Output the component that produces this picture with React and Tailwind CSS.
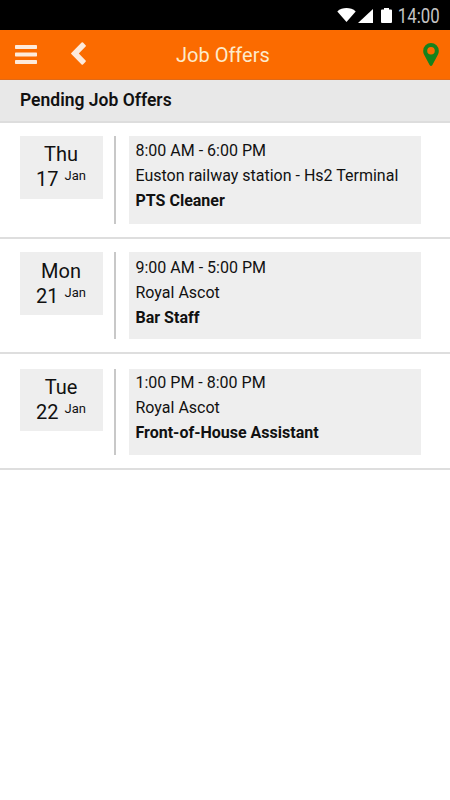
const offers = [
  {
    day: "Thu",
    date: "17",
    month: "Jan",
    time: "8:00 AM - 6:00 PM",
    place: "Euston railway station - Hs2 Terminal",
    role: "PTS Cleaner",
    row: "h-[116px] pt-[13px]",
    box: "h-[88px] pt-[2px]",
    dateBox: "h-[63px] pt-[6px]",
  },
  {
    day: "Mon",
    date: "21",
    month: "Jan",
    time: "9:00 AM - 5:00 PM",
    place: "Royal Ascot",
    role: "Bar Staff",
    row: "h-[115px] pt-[13px]",
    box: "h-[87px] pt-[3px]",
    dateBox: "h-[63px] pt-[7px]",
  },
  {
    day: "Tue",
    date: "22",
    month: "Jan",
    time: "1:00 PM - 8:00 PM",
    place: "Royal Ascot",
    role: "Front-of-House Assistant",
    row: "h-[116px] pt-[15px]",
    box: "h-[86px] pt-[1px]",
    dateBox: "h-[62px] pt-[6px]",
  },
];

function StatusBar() {
  return (
    <div className="flex h-[30px] items-center justify-end bg-black pr-[10px] text-white">
      {/* Wifi */}
      <svg width="19" height="14" viewBox="0 0 19 14" fill="currentColor">
        <path d="M0.3 3.4 C5.2 -1 13.8 -1 18.7 3.4 L9.5 14 Z" />
      </svg>
      {/* Signal */}
      <svg width="15" height="14" viewBox="0 0 15 14" fill="currentColor" className="ml-[2px] mt-[1px]">
        <path d="M15 0 V14 H0 Z" />
      </svg>
      {/* Battery */}
      <svg width="11" height="15" viewBox="0 0 11 15" fill="currentColor" className="ml-2">
        <path d="M3 0 H8 V1.5 H10 Q11 1.5 11 2.5 V14 Q11 15 10 15 H1 Q0 15 0 14 V2.5 Q0 1.5 1 1.5 H3 Z" />
      </svg>
      <span className="-ml-px mt-[3px] origin-right scale-x-[0.86] text-[19.5px] leading-none text-[#c4c4c4]">
        14:00
      </span>
    </div>
  );
}

function Header() {
  return (
    <header className="flex h-[50px] items-center border-b border-[#e06a18] bg-[#fb6b00] pr-[11px] pl-[15px]">
      <div className="flex items-center gap-[34px] text-[#fdeadb]">
        <svg width="22" height="19" viewBox="0 0 22 19" fill="currentColor">
          <rect width="22" height="4" rx="0.7" />
          <rect y="7.5" width="22" height="4" rx="0.7" />
          <rect y="15" width="22" height="4" rx="0.7" />
        </svg>
        <svg width="15" height="23" viewBox="0 0 15 23" fill="currentColor" className="mb-[2px]">
          <path d="M0.3 11 L10.6 0.6 Q11.3 0 12 0.6 L14.6 3.2 Q15.3 3.9 14.6 4.6 L7.8 11.5 L14.6 18.4 Q15.3 19.1 14.6 19.8 L12 22.4 Q11.3 23 10.6 22.4 L0.3 12 Q-0.2 11.5 0.3 11 Z" />
        </svg>
      </div>
      <h1 className="ml-[90px] text-[20px] leading-none text-[#fdeacb]">Job Offers</h1>
      <svg width="16" height="23" viewBox="0 0 16 23" className="ml-auto">
        <path
          fill="#15821c"
          fillRule="evenodd"
          d="M8 0 A7.8 7.8 0 0 1 15.8 7.8 C15.8 10 15.3 10.9 14.6 12.3 L9.4 22 Q8 24 6.6 22 L1.4 12.3 C0.7 10.9 0.2 10 0.2 7.8 A7.8 7.8 0 0 1 8 0 Z M8 4 A3.8 3.8 0 1 0 8 11.6 A3.8 3.8 0 1 0 8 4 Z"
        />
      </svg>
    </header>
  );
}

function OfferRow({ offer }) {
  return (
    <li className={`flex items-start border-b-2 border-[#dedede] pl-5 ${offer.row}`}>
      <div className={`w-[83px] bg-[#eeeeee] text-center text-[20px] leading-[25px] ${offer.dateBox}`}>
        <div className="pr-px">{offer.day}</div>
        <div className="flex justify-center gap-[6px] pr-px">
          <span>{offer.date}</span>
          <span className="text-[13px] leading-[18px]">{offer.month}</span>
        </div>
      </div>
      <div className={`ml-[11px] w-[2px] bg-[#c8c8c8] ${offer.box}`} />
      <div className={`ml-[13px] w-[292px] bg-[#eeeeee] pl-[6.5px] text-[16px] leading-[25px] ${offer.box}`}>
        <div>{offer.time}</div>
        <div>{offer.place}</div>
        <div className="font-bold">{offer.role}</div>
      </div>
    </li>
  );
}

export default function App() {
  return (
    <div className="min-h-screen bg-white font-['Roboto',sans-serif] text-[#111111]">
      <StatusBar />
      <Header />
      <h2 className="h-[43px] border-b-2 border-[#dddddd] bg-[#e8e8e8] pl-5 text-[17.5px] leading-[41px] font-semibold">
        Pending Job Offers
      </h2>
      <ul>
        {offers.map((offer) => (
          <OfferRow key={offer.day} offer={offer} />
        ))}
      </ul>
    </div>
  );
}
